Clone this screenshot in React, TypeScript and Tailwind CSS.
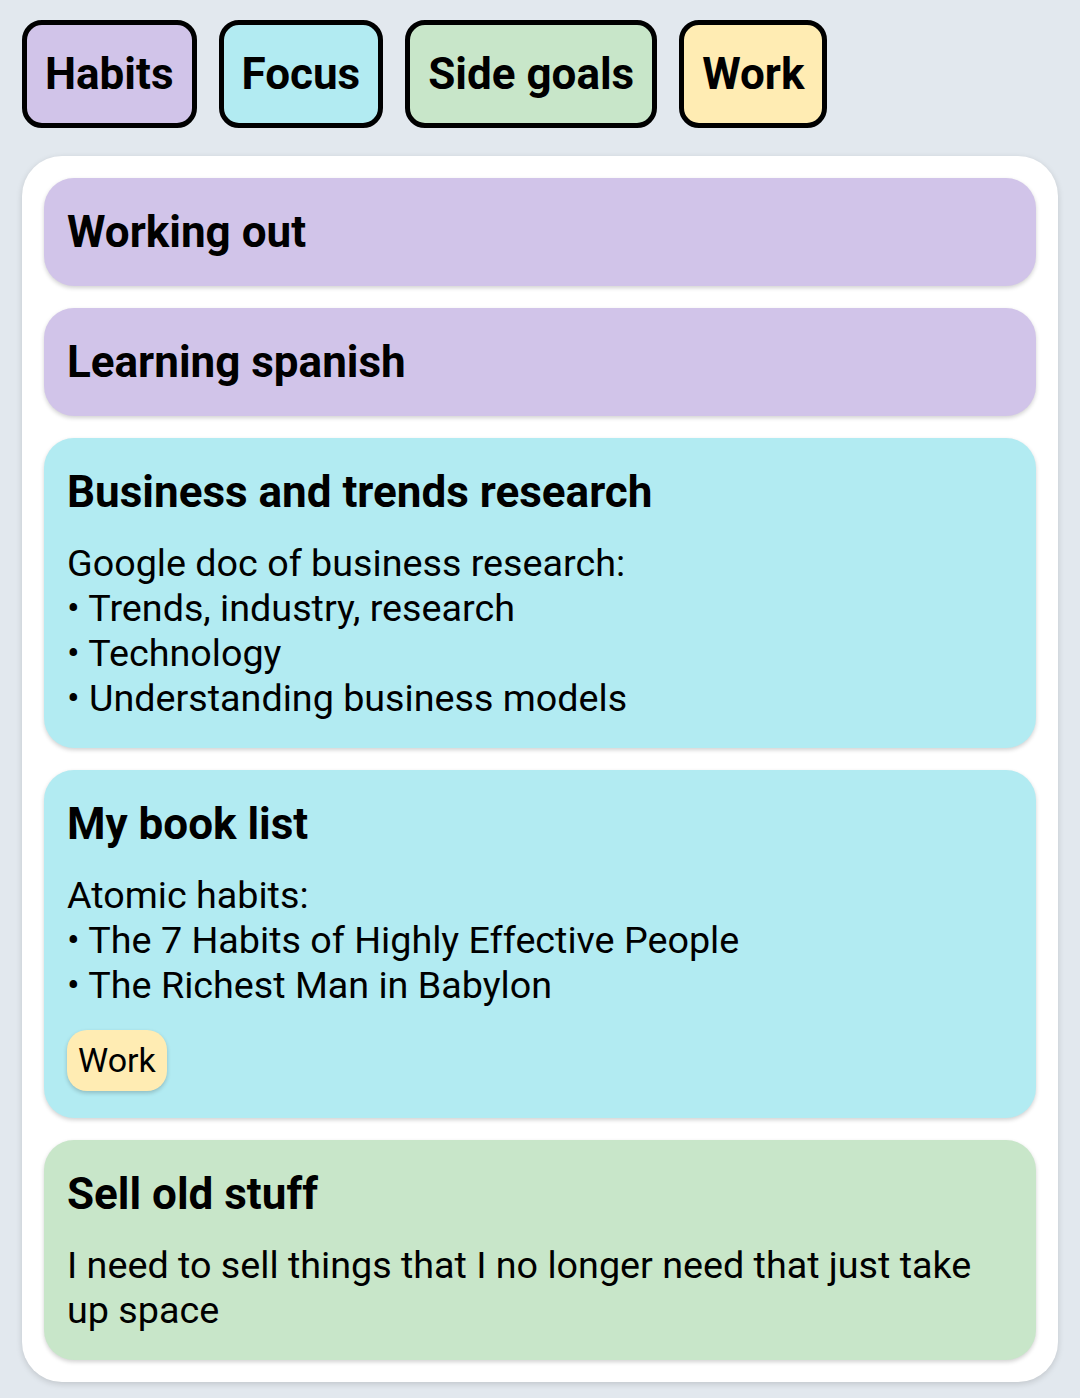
import React from 'react';

const tags = [
    { name: 'Habits', bg: 'bg-[#d1c4e9]' },
    { name: 'Focus', bg: 'bg-[#b2ebf2]' },
    { name: 'Side goals', bg: 'bg-[#c8e6c9]' },
    { name: 'Work', bg: 'bg-[#ffecb3]' },
];

interface Note {
    title: string;
    bg: string;
    lines?: string[];
    label?: string;
}

const notes: Note[] = [
    { title: 'Working out', bg: 'bg-[#d1c4e9]' },
    { title: 'Learning spanish', bg: 'bg-[#d1c4e9]' },
    {
        title: 'Business and trends research',
        bg: 'bg-[#b2ebf2]',
        lines: [
            'Google doc of business research:',
            '• Trends, industry, research',
            '• Technology',
            '• Understanding business models',
        ],
    },
    {
        title: 'My book list',
        bg: 'bg-[#b2ebf2]',
        lines: [
            'Atomic habits:',
            '• The 7 Habits of Highly Effective People',
            '• The Richest Man in Babylon',
        ],
        label: 'Work',
    },
    {
        title: 'Sell old stuff',
        bg: 'bg-[#c8e6c9]',
        lines: ['I need to sell things that I no longer need that just take up space'],
    },
];

function NoteCard({ note }: { note: Note }) {
    const hasBody = !!note.lines;
    return (
        <div className={`${note.bg} rounded-[30px] pl-[23px] pr-[40px] pt-6 ${hasBody ? 'pb-[27px]' : 'pb-6'} shadow-[0_2px_4px_rgba(0,0,0,0.18)]`}>
            <h2 className="text-[44px] leading-[60px] font-bold text-black">{note.title}</h2>
            {note.lines && (
                <div className="mt-[19px] text-[37.7px] leading-[45px] text-black">
                    {note.lines.map((l, i) => (
                        <div key={i}>{l}</div>
                    ))}
                </div>
            )}
            {note.label && (
                <div className="mt-[22px] flex">
                    <span className="bg-[#ffecb3] rounded-[20px] px-[11px] h-[61px] flex items-center text-[34px] text-black shadow-[0_2px_4px_rgba(0,0,0,0.2)]">
                        {note.label}
                    </span>
                </div>
            )}
        </div>
    );
}

export default function App() {
    return (
        <div className="min-h-[1398px] w-[1080px] bg-[#e2e8ee] px-[22px] pt-5 pb-4 font-['Roboto',sans-serif]">
            <div className="flex gap-[22px]">
                {tags.map(t => (
                    <button
                        key={t.name}
                        className={`${t.bg} h-[108px] px-[18px] border-[5px] border-black rounded-[20px] text-[44px] font-bold text-black`}
                    >
                        {t.name}
                    </button>
                ))}
            </div>
            <div className="mt-7 bg-white rounded-[40px] p-[22px] flex flex-col gap-[22px] shadow-[0_2px_6px_rgba(0,0,0,0.15)]">
                {notes.map(n => (
                    <NoteCard key={n.title} note={n} />
                ))}
            </div>
        </div>
    );
}
